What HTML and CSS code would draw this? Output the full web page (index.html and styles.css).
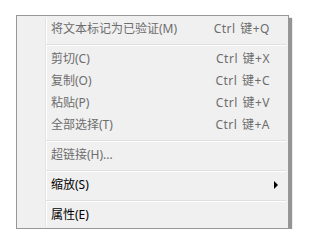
FILE: index.html
```html
<!DOCTYPE html>
<html lang="zh-CN">
  <head>
    <meta charset='utf-8'>
    <title>Context menu</title>
<link rel="stylesheet" href="styles.css">
</head>
<body>

<div class="menu">
  <div class="item disabled"><span class="label">将文本标记为已验证(M)</span><span class="key">Ctrl 键+Q</span></div>
  <div class="sep"></div>
  <div class="item disabled"><span class="label">剪切(C)</span><span class="key">Ctrl 键+X</span></div>
  <div class="item disabled"><span class="label">复制(O)</span><span class="key">Ctrl 键+C</span></div>
  <div class="item disabled"><span class="label">粘贴(P)</span><span class="key">Ctrl 键+V</span></div>
  <div class="item disabled"><span class="label">全部选择(T)</span><span class="key">Ctrl 键+A</span></div>
  <div class="sep"></div>
  <div class="item disabled"><span class="label">超链接(H)...</span></div>
  <div class="sep"></div>
  <div class="item sub"><span class="label">缩放(S)</span><span class="arrow"></span></div>
  <div class="sep"></div>
  <div class="item"><span class="label">属性(E)</span></div>
</div>

</body></html>
```

FILE: styles.css
```css
body {
    margin: 0;
    background-color: #ffffff;
    font-family: "Noto Sans", "Noto Sans CJK SC", sans-serif;
    font-size: 12px;
    color: #000000;
}

/* Menu box */
.menu {
    box-sizing: border-box;
    width: 273px;
    margin: 15px 0 0 16px;
    padding: 2px;
    border: 1px solid #979797;
    background:
      linear-gradient(#e2e3e3, #e2e3e3) no-repeat 28px 2px / 1px calc(100% - 4px),
      linear-gradient(#ffffff, #ffffff) no-repeat 29px 2px / 1px calc(100% - 4px),
      #f0f0f0;
    box-shadow: 3px 3px 1px rgba(0, 0, 0, 0.42);
}

/* Rows */
.item {
    display: flex;
    align-items: center;
    height: 22px;
    line-height: 22px;
    padding: 0 17px 0 32px;
    white-space: nowrap;
}

.item .key {
    margin-left: auto;
    margin-right: -1px;
    letter-spacing: 0.5px;
    word-spacing: 1px;
}

.disabled {
    color: #6d6d6d;
}

.sub {
    padding-right: 8px;
}

.arrow {
    margin-left: auto;
    width: 0;
    height: 0;
    border-left: 4px solid #000000;
    border-top: 4px solid transparent;
    border-bottom: 4px solid transparent;
}

/* Separators */
.sep {
    height: 1px;
    margin: 4px 0 2px 27px;
    background-color: #e0e0e0;
    border-bottom: 1px solid #ffffff;
}
```
